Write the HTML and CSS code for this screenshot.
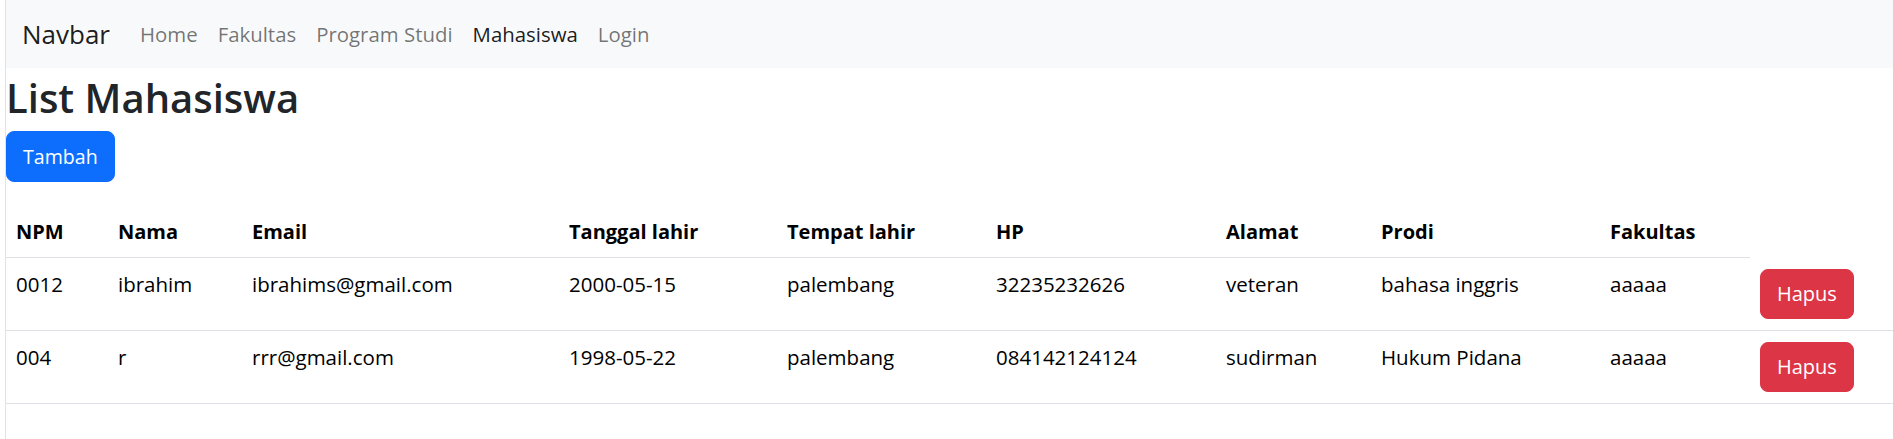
FILE: index.html
```html
<!DOCTYPE html>
<html lang="id">
<head>
<meta charset="utf-8">
<title>List Mahasiswa</title>
<link rel="stylesheet" href="styles.css">
</head>
<body>
<div class="page">
  <nav class="navbar">
    <a class="navbar-brand" href="#">Navbar</a>
    <ul class="nav">
      <li><a class="nav-link" href="#">Home</a></li>
      <li><a class="nav-link" href="#">Fakultas</a></li>
      <li><a class="nav-link" href="#">Program Studi</a></li>
      <li><a class="nav-link active" href="#">Mahasiswa</a></li>
      <li><a class="nav-link" href="#">Login</a></li>
    </ul>
  </nav>
  <main class="content">
    <h1 class="title">List Mahasiswa</h1>
    <div class="toolbar">
      <a class="btn btn-primary" href="#">Tambah</a>
    </div>
    <table class="table">
      <colgroup>
        <col class="c-npm">
        <col class="c-nama">
        <col class="c-email">
        <col class="c-tgl">
        <col class="c-tempat">
        <col class="c-hp">
        <col class="c-alamat">
        <col class="c-prodi">
        <col class="c-fak">
        <col class="c-aksi">
      </colgroup>
      <thead>
        <tr>
          <th>NPM</th>
          <th>Nama</th>
          <th>Email</th>
          <th>Tanggal lahir</th>
          <th>Tempat lahir</th>
          <th>HP</th>
          <th>Alamat</th>
          <th>Prodi</th>
          <th>Fakultas</th>
        </tr>
      </thead>
      <tbody>
        <tr>
          <td>0012</td>
          <td>ibrahim</td>
          <td>ibrahims@gmail.com</td>
          <td>2000-05-15</td>
          <td>palembang</td>
          <td>32235232626</td>
          <td>veteran</td>
          <td>bahasa inggris</td>
          <td>aaaaa</td>
          <td><button class="btn btn-danger" type="button">Hapus</button></td>
        </tr>
        <tr>
          <td>004</td>
          <td>r</td>
          <td>rrr@gmail.com</td>
          <td>1998-05-22</td>
          <td>palembang</td>
          <td>084142124124</td>
          <td>sudirman</td>
          <td>Hukum Pidana</td>
          <td>aaaaa</td>
          <td><button class="btn btn-danger" type="button">Hapus</button></td>
        </tr>
      </tbody>
    </table>
  </main>
</div>
</body>
</html>
```

FILE: styles.css
```css
* {
  box-sizing: border-box;
}

html, body {
  margin: 0;
  background: #ffffff;
}

body {
  padding-left: 5px;
  font-family: "Open Sans", "Noto Sans", sans-serif;
  font-size: 20px;
  line-height: 30px;
  color: #212529;
}

.page {
  border-left: 1px solid #e2e2e2;
  min-height: 100vh;
}

/* Navbar */
.navbar {
  height: 68px;
  background: #f8f9fa;
  display: flex;
  align-items: center;
  padding: 0 15px 0 16px;
}

.navbar-brand {
  font-size: 26px;
  line-height: 36px;
  color: rgba(0, 0, 0, 0.9);
  text-decoration: none;
  margin-right: 20px;
}

.nav {
  display: flex;
  list-style: none;
  margin: 0;
  padding: 0;
}

.nav-link {
  display: block;
  padding: 0 10px;
  font-size: 20.4px;
  line-height: 30px;
  color: rgba(0, 0, 0, 0.55);
  text-decoration: none;
}

.nav-link.active {
  color: rgba(0, 0, 0, 0.9);
}

/* Content */
.title {
  margin: 6px 0 9px;
  font-size: 40px;
  line-height: 48px;
  font-weight: 600;
  color: #212529;
}

.toolbar {
  display: flex;
}

.btn {
  display: inline-flex;
  align-items: center;
  justify-content: center;
  border: 1px solid transparent;
  border-radius: 8px;
  font-family: inherit;
  color: #ffffff;
  text-decoration: none;
  cursor: pointer;
}

.btn-primary {
  height: 51px;
  padding: 0 16px;
  font-size: 19.6px;
  background: #0d6efd;
  border-color: #0d6efd;
}

.btn-danger {
  height: 50px;
  padding: 0 16px;
  font-size: 20px;
  background: #dc3545;
  border-color: #dc3545;
}

/* Table */
.table {
  width: 100%;
  margin-top: 25px;
  border-collapse: collapse;
  table-layout: fixed;
}

.c-npm { width: 102px; }
.c-nama { width: 134px; }
.c-email { width: 317px; }
.c-tgl { width: 218px; }
.c-tempat { width: 209px; }
.c-hp { width: 230px; }
.c-alamat { width: 155px; }
.c-prodi { width: 229px; }
.c-fak { width: 150px; }
.c-aksi { width: 143px; }

.table th,
.table td {
  text-align: left;
  vertical-align: top;
  border-bottom: 1px solid #dee2e6;
  white-space: nowrap;
}

.table th {
  padding: 10px;
  font-weight: 700;
  color: #000000;
}

.table td {
  padding: 11px 10px 11px;
  font-size: 20.5px;
  color: #000000;
}
```
